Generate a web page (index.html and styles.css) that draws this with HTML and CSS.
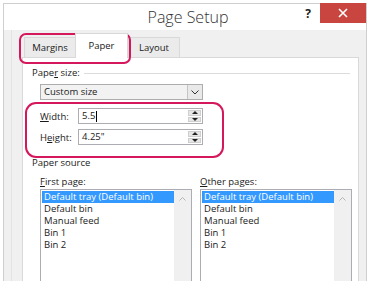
FILE: index.html
```html
<!DOCTYPE html>
<html lang="en">

<head>
    <meta charset="UTF-8">
    <meta name="viewport" content="width=device-width, initial-scale=1.0">
    <title>Page Setup</title>
    <link rel="stylesheet" href="styles.css">
</head>

<body>

    <div class="window">
        <!-- Title bar -->
        <div class="titlebar">
            <div class="title">Page Setup</div>
            <div class="help">?</div>
            <div class="close">
                <svg width="10" height="10" viewBox="0 0 10 10">
                    <path d="M1 1 L9 9 M9 1 L1 9" stroke="#fff" stroke-width="1.6" fill="none"/>
                </svg>
            </div>
        </div>

        <div class="body">
            <!-- Tabs -->
            <div class="tabs">
                <div class="tab">Margins</div>
                <div class="tab active">Paper</div>
                <div class="tab">Layout</div>
            </div>

            <div class="panel">
                <!-- Paper size -->
                <div class="group-title"><span>Pape<u>r</u> size:</span></div>
                <div class="dropdown">
                    <span class="dropdown-text">Custom size</span>
                    <span class="dropdown-btn">
                        <svg width="8" height="5" viewBox="0 0 8 5">
                            <path d="M0.5 0.5 L4 4 L7.5 0.5" stroke="#333" stroke-width="1" fill="none"/>
                        </svg>
                    </span>
                </div>

                <div class="field">
                    <label><u>W</u>idth:</label>
                    <div class="spin-input">
                        <span class="value">5.5<span class="caret"></span></span>
                        <span class="spin">
                            <span class="spin-up"></span>
                            <span class="spin-down"></span>
                        </span>
                    </div>
                </div>
                <div class="field">
                    <label>H<u>e</u>ight:</label>
                    <div class="spin-input">
                        <span class="value">4.25"</span>
                        <span class="spin">
                            <span class="spin-up"></span>
                            <span class="spin-down"></span>
                        </span>
                    </div>
                </div>

                <!-- Paper source -->
                <div class="group-title plain"><span>Paper source</span></div>
                <div class="sources">
                    <div class="source">
                        <div class="source-label"><u>F</u>irst page:</div>
                        <div class="listbox">
                            <div class="items">
                                <div class="item selected">Default tray (Default bin)</div>
                                <div class="item">Default bin</div>
                                <div class="item">Manual feed</div>
                                <div class="item">Bin 1</div>
                                <div class="item">Bin 2</div>
                            </div>
                            <div class="scroll">
                                <svg width="7" height="4" viewBox="0 0 7 4">
                                    <path d="M0.5 3.5 L3.5 0.5 L6.5 3.5" stroke="#b5b5b5" stroke-width="1" fill="none"/>
                                </svg>
                            </div>
                        </div>
                    </div>
                    <div class="source">
                        <div class="source-label"><u>O</u>ther pages:</div>
                        <div class="listbox">
                            <div class="items">
                                <div class="item selected">Default tray (Default bin)</div>
                                <div class="item">Default bin</div>
                                <div class="item">Manual feed</div>
                                <div class="item">Bin 1</div>
                                <div class="item">Bin 2</div>
                            </div>
                            <div class="scroll">
                                <svg width="7" height="4" viewBox="0 0 7 4">
                                    <path d="M0.5 3.5 L3.5 0.5 L6.5 3.5" stroke="#b5b5b5" stroke-width="1" fill="none"/>
                                </svg>
                            </div>
                        </div>
                    </div>
                </div>
            </div>
        </div>
    </div>

    <!-- Highlight rings -->
    <div class="ring ring-tabs"></div>
    <div class="ring ring-size"></div>

</body>

</html>
```

FILE: styles.css
```css
* {
    box-sizing: border-box;
    margin: 0;
    padding: 0;
}

body {
    font-family: 'Open Sans', 'Noto Sans', sans-serif;
    font-size: 9.5px;
    color: #1a1a1a;
    background-color: #fff;
    width: 375px;
    height: 281px;
    overflow: hidden;
    position: relative;
}

u {
    text-decoration: underline;
    text-underline-offset: 1px;
}

.window {
    margin: 3px 0 0 3px;
    width: 364px;
    border: 1px solid #cfcfcf;
    border-bottom: none;
}

.titlebar {
    display: flex;
    height: 26px;
    background-color: #fff;
}

.title {
    flex: 1;
    padding-left: 76px;
    text-align: center;
    font-size: 16px;
    font-weight: 300;
    line-height: 26px;
    color: #333;
}

.help {
    width: 24px;
    text-align: center;
    font-size: 12px;
    font-weight: 700;
    line-height: 20px;
    color: #222;
}

.close {
    width: 46px;
    height: 20px;
    margin-top: -1px;
    background-color: #c9453f;
    display: flex;
    justify-content: center;
    align-items: center;
}

.body {
    height: 260px;
    padding: 3px 7px 0 18px;
    background: linear-gradient(to right, transparent 7px, #e3e3e3 7px, #e3e3e3 8px, transparent 8px), #f0f0f0;
}

.tabs {
    display: flex;
    align-items: flex-end;
    height: 24px;
    padding-left: 2px;
}

.tab {
    height: 20px;
    border: 1px solid #d9d9d9;
    border-bottom: none;
    background-color: #ebebeb;
    line-height: 19px;
    text-align: center;
    width: 52px;
}

.tab:first-child {
    width: 51px;
    border-right: none;
}

.tab.active {
    width: 53px;
    height: 25px;
    margin-bottom: -1px;
    background-color: #fff;
    line-height: 24px;
    position: relative;
    z-index: 1;
}

.panel {
    height: 240px;
    padding-top: 9px;
    background-color: #fff;
    border: 1px solid #d9d9d9;
}

.group-title {
    display: flex;
    align-items: center;
    padding-left: 9px;
    line-height: 12px;
}

.group-title::after {
    content: "";
    flex: 1;
    height: 1px;
    margin: 0 8px 0 4px;
    background-color: #dcdcdc;
}

.group-title.plain {
    margin-top: 12px;
}

.group-title.plain::after {
    display: none;
}

.dropdown {
    display: flex;
    width: 163px;
    height: 16px;
    margin: 5px 0 0 17px;
    border: 1px solid #adadad;
    background-color: #f2f2f2;
}

.dropdown-text {
    flex: 1;
    padding-left: 3px;
    line-height: 14px;
}

.dropdown-btn {
    width: 15px;
    border-left: 1px solid #c4c4c4;
    background-color: #e9e9e9;
    display: flex;
    justify-content: center;
    align-items: center;
}

.field {
    display: flex;
    align-items: center;
    margin: 8px 0 0 17px;
}

.field + .field {
    margin-top: 5px;
}

.field label {
    width: 38px;
}

.spin-input {
    display: flex;
    width: 125px;
    height: 16px;
    border: 1px solid #abadb3;
    background-color: #fff;
}

.value {
    flex: 1;
    padding-left: 3px;
    line-height: 14px;
    display: flex;
    align-items: center;
}

.caret {
    width: 1px;
    height: 11px;
    margin-left: 1px;
    background-color: #000;
}

.spin {
    width: 15px;
    display: flex;
    flex-direction: column;
    gap: 1px;
    padding: 1px;
}

.spin-up,
.spin-down {
    flex: 1;
    background-color: #e6e6e6;
    border: 1px solid #cfcfcf;
    display: flex;
    justify-content: center;
    align-items: center;
}

.spin-up::before,
.spin-down::before {
    content: "";
    border-left: 3px solid transparent;
    border-right: 3px solid transparent;
}

.spin-up::before {
    border-bottom: 3px solid #222;
}

.spin-down::before {
    border-top: 3px solid #222;
}

.sources {
    display: grid;
    grid-template-columns: 152px 152px;
    column-gap: 8px;
    padding-left: 17px;
    margin-top: 7px;
}

.source-label {
    line-height: 12px;
    margin-bottom: 1px;
}

.listbox {
    display: flex;
    height: 100px;
    border: 1px solid #abadb3;
}

.items {
    flex: 1;
    padding: 1px 0 0 1px;
}

.item {
    height: 12px;
    line-height: 12px;
    padding-left: 2px;
    white-space: nowrap;
}

.item.selected {
    background-color: #3399ff;
    color: #fff;
}

.scroll {
    width: 17px;
    background-color: #f0f0f0;
    display: flex;
    justify-content: center;
    align-items: flex-start;
    padding-top: 7px;
}

.ring {
    position: absolute;
    border: 2px solid #d5175b;
}

.ring-tabs {
    left: 19px;
    top: 33px;
    width: 112px;
    height: 31px;
    border-radius: 7px;
}

.ring-size {
    left: 25px;
    top: 102px;
    width: 199px;
    height: 56px;
    border-radius: 11px;
}
```
